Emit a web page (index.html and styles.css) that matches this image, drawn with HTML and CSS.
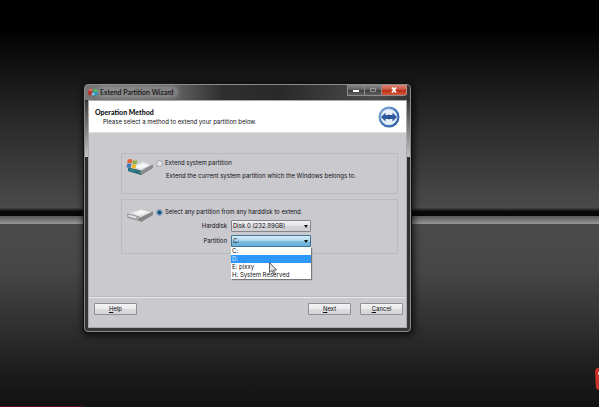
FILE: index.html
```html
<!DOCTYPE html>
<html lang="en">
<head>
  <meta charset="UTF-8"/>
  <meta name="viewport" content="width=device-width, initial-scale=1.0"/>
  <title>Extend Partition Wizard</title>
  <link rel="stylesheet" href="styles.css">
</head>
<body>
  <main class="desktop">
    <section class="window" aria-labelledby="windowTitle">
      <header class="titlebar">
        <svg class="app-icon" viewBox="0 0 20 16">
          <path d="M0 5l6-4 5 3v9l-5 2-6-2z" fill="#b5332c"/>
          <path d="M6 1l5 3-5 3-6-2z" fill="#e0705c"/>
          <path d="M9 4l5-3 6 4v8l-6 3-5-3z" fill="#2b8fb5"/>
          <path d="M9 4l5-3 6 4-5 4z" fill="#58b84e"/>
          <path d="M8 10l3-1 3 3-3 3-4-1z" fill="#7fd0e8"/>
        </svg>
        <h1 id="windowTitle" class="window-title">Extend Partition Wizard</h1>
        <div class="window-controls">
          <button class="control" type="button" aria-label="Minimize">
            <svg viewBox="0 0 8 8"><path d="M1 4h6v2H1z" fill="#fff"/></svg>
          </button>
          <button class="control" type="button" aria-label="Maximize" disabled>
            <svg viewBox="0 0 8 8"><path d="M1.500 2.500h5v3h-5z" fill="none" stroke="#999"/></svg>
          </button>
          <button class="control close" type="button" aria-label="Close">
            <svg viewBox="0 0 8 8"><path d="M2 1.500l4 5M6 1.500l-4 5" stroke="#fff" stroke-width="1.800"/></svg>
          </button>
        </div>
      </header>

      <form class="wizard">
        <div class="wizard-header">
          <div class="heading">
            <h2>Operation Method</h2>
            <p>Please select a method to extend your partition below.</p>
          </div>
          <svg class="resize-icon" viewBox="0 0 44 44">
            <defs>
              <linearGradient id="ring" x1="0" y1="0" x2="1" y2="1">
                <stop offset="0" stop-color="#8fb4df"/>
                <stop offset="0.500" stop-color="#3f74b8"/>
                <stop offset="1" stop-color="#23549c"/>
              </linearGradient>
            </defs>
            <circle cx="22" cy="22" r="21" fill="url(#ring)"/>
            <circle cx="22" cy="22" r="16" fill="#e9f0fa" stroke="#c3d5ec" stroke-width="2"/>
            <path d="M6 22l9-9v5h14v-5l9 9-9 9v-5H15v5z" fill="#2d5a9b"/>
            <path d="M22 17v10" stroke="#1b3f78" stroke-width="2"/>
          </svg>
        </div>

        <div class="wizard-body">
          <div class="group group-system">
            <svg class="disk-icon" viewBox="0 0 84 54">
              <path d="M6 30l42-19 33 10-1 9-34 21-40-12z" fill="#6f7373"/>
              <path d="M8 27l42-17 29 10-33 18z" fill="#d6d8da"/>
              <path d="M21 27l31-12 18 6-24 12z" fill="#f4f5f6"/>
              <path d="M6 28l40 11v12L6 39z" fill="#276b78"/>
              <path d="M46 38l34-17v9L46 51z" fill="#8b8e90"/>
              <path d="M10 32l18 5v5l-18-5z" fill="#3288a0"/>
              <path d="M40 41l4 1v4l-4-1z" fill="#6fc25c"/>
              <path d="M5 6c5-4 10-4 14-1l-2 11c-5-3-9-2-13 1z" fill="#e2632f"/>
              <path d="M21 6c5 3 9 3 13 0l-2 11c-4 3-8 3-13 0z" fill="#8fae4a"/>
              <path d="M3 19c5-3 9-4 13-1l-2 11c-4-3-8-2-12 1z" fill="#3478bd"/>
              <path d="M18 19c5 3 9 3 13 0l-2 11c-4 3-8 3-13 0z" fill="#f0b934"/>
            </svg>
            <div class="options">
              <label class="option"><input type="radio" name="method" value="system">Extend system partition</label>
              <p class="note">Extend the current system partition which the Windows belongs to.</p>
            </div>
          </div>

          <div class="group group-any">
            <svg class="disk-icon" viewBox="0 0 84 54">
              <path d="M4 20l40-15 37 9v9L46 44 5 32z" fill="#777"/>
              <path d="M5 19l39-14 36 9-34 17z" fill="#dededf"/>
              <path d="M22 19l25-9 19 5-23 10z" fill="#f6f6f6"/>
              <path d="M4 20l42 11v13L5 31z" fill="#a9a9aa"/>
              <path d="M46 31l34-16v8L46 44z" fill="#858586"/>
              <path d="M8 23l22 6v5L8 28z" fill="#ececec"/>
              <path d="M39 34l5 1v5l-5-1z" fill="#47514a"/>
            </svg>
            <div class="options">
              <label class="option"><input type="radio" name="method" value="any" checked>Select any partition from any harddisk to extend.</label>
              <div class="field">
                <label for="harddisk">Harddisk</label>
                <div class="picker">
                  <select id="harddisk"><option>Disk 0 (232.89GB)</option></select>
                </div>
              </div>
              <div class="field">
                <label for="partition">Partition</label>
                <div class="picker open">
                  <select id="partition">
                    <option>C:</option>
                    <option>D:</option>
                    <option>E: pixxy</option>
                    <option>H: System Reserved</option>
                  </select>
                  <ul class="dropdown" role="listbox" aria-label="Partition">
                    <li role="option">C:</li>
                    <li role="option" class="active" aria-selected="true">D:</li>
                    <li role="option">E: pixxy</li>
                    <li role="option">H: System Reserved</li>
                  </ul>
                  <svg class="cursor" viewBox="0 0 16 28">
                    <path d="M1 1v20l5-4 4 9 3-2-4-8h6z" fill="#e4e4e8" stroke="#333" stroke-width="1.500"/>
                  </svg>
                </div>
              </div>
            </div>
          </div>
        </div>

        <footer class="wizard-footer">
          <button class="button" type="button"><u>H</u>elp</button>
          <button class="button next" type="button"><u>N</u>ext</button>
          <button class="button" type="button"><u>C</u>ancel</button>
        </footer>
      </form>
    </section>

    <svg class="desktop-badge" viewBox="0 0 4 22">
      <path d="M4 0H2Q0 1 0 4l1 16q1 2 3 2z" fill="#c9322a"/>
      <path d="M3 4h1v3H3z" fill="#e9c8c4"/>
    </svg>
    <div class="progress"></div>
  </main>
</body>
</html>
```
FILE: styles.css
```css
:root {
  --face: #cac9ce;
  --line: #b9b9c0;
  --text: #101014;
  --highlight: #2f96fa;
}

* {
  margin: 0;
  padding: 0;
  box-sizing: border-box;
}

body {
  font-family: Inter, 'Liberation Sans', sans-serif;
  font-size: 6px;
  line-height: 10px;
  color: var(--text);
}

.desktop {
  position: relative;
  min-height: 100vh;
  overflow: hidden;
  background: linear-gradient(#000 0%, #000 7%, #1c1c1c 22%, #333 36%, #4a4a4a 51%, #080808 52%, #080808 53%, #555 53%, #969696 55%, #4b4b4b 55%, #474747 66%, #303030 80%, #1b1b1b 92%, #121212 100%);
}

/* Window frame */
.window {
  position: absolute;
  left: 84px;
  top: 84px;
  width: 327px;
  padding: 0 3px 3px;
  border: 1px solid #8a8c8c;
  border-radius: 4px;
  background:
    linear-gradient(#3c3c3c, #c4c4c4) 0 16px / 100% 56px no-repeat,
    linear-gradient(#4c4c4c, #2a2a2a 16px, #343836);
  box-shadow: 0 0 0 1px #111, 1px 2px 7px 2px rgba(0, 0, 0, 0.7);
}

.titlebar {
  display: flex;
  align-items: center;
  height: 15px;
  margin: 0 -3px;
  padding: 0 3px 1px;
  border-radius: 3px 3px 0 0;
  background: linear-gradient(90deg, #777 0%, #686868 26%, #2f2f2f 42%, #292929 60%, #4c4c4c 90%, #333 100%);
}

.app-icon {
  width: 10px;
  height: 8px;
}

.window-title {
  padding: 0 4px 0 2px;
  font-family: Lato, 'Liberation Sans', sans-serif;
  font-size: 7px;
  font-weight: normal;
  color: #000;
  background: rgba(170, 170, 170, 0.4);
  border-radius: 5px;
  box-shadow: 0 0 4px 1px rgba(170, 170, 170, 0.4);
}

.window-controls {
  display: flex;
  align-self: flex-start;
  margin-left: auto;
}

.control {
  display: flex;
  align-items: center;
  justify-content: center;
  width: 17px;
  height: 11px;
  border: 1px solid #8d8d8d;
  border-top: none;
  border-right: none;
  background: linear-gradient(#8a8a8a, #5d5d5d 50%, #3c3c3c 50%, #606060);
}

.control svg {
  width: 8px;
  height: 8px;
}

.control.close {
  width: 26px;
  border-right: 1px solid #b58b84;
  border-radius: 0 0 3px 0;
  background: linear-gradient(#dd8674, #c8503a 50%, #b52a12 50%, #d9593c);
}

/* Wizard */
.wizard {
  background: var(--face);
  border: 1px solid #a9aaac;
}

.wizard-header {
  display: flex;
  align-items: center;
  justify-content: space-between;
  padding: 5px 6px 4px;
  background: #fff;
  border-bottom: 1px solid #dfdfe2;
}

.heading h2 {
  font-family: Lato, 'Liberation Sans', sans-serif;
  font-size: 7px;
  font-weight: 900;
  line-height: 10px;
}

.heading p {
  padding-left: 8px;
}

.resize-icon {
  width: 22px;
  height: 22px;
}

.wizard-body {
  display: grid;
  gap: 5px;
  padding: 20px 8px 43px 32px;
}

.group {
  display: flex;
  align-items: flex-start;
  gap: 2px;
  padding-left: 4px;
  border: 1px solid var(--line);
}

.group-system {
  min-height: 41px;
  padding-top: 4px;
}

.group-any {
  padding-top: 7px;
  padding-bottom: 6px;
}

.disk-icon {
  width: 28px;
  height: 18px;
}

.options {
  display: grid;
  gap: 3px;
}

.option {
  display: flex;
  align-items: center;
  gap: 2px;
}

.option input {
  appearance: none;
  width: 7px;
  height: 7px;
  border: 1px solid #a2a2a8;
  border-radius: 50%;
  background: #e4e4e8;
}

.option input:checked {
  border-color: #8b98a8;
  background: radial-gradient(circle, #12466f 0 1px, #3f87b8 2px, #d8e4ec 3px);
}

.note {
  padding-left: 10px;
}

.field {
  display: flex;
  align-items: center;
  gap: 4px;
}

.field label {
  width: 71px;
  text-align: right;
}

.picker {
  position: relative;
  width: 80px;
}

.picker::after {
  content: "";
  position: absolute;
  right: 3px;
  top: 5px;
  border: 2px solid transparent;
  border-top: 3px solid #111;
  border-bottom: none;
  pointer-events: none;
}

.picker select {
  display: block;
  appearance: none;
  width: 100%;
  height: 12px;
  padding: 0 10px 0 1px;
  font: inherit;
  color: var(--text);
  border: 1px solid #85858a;
  border-radius: 1px;
  background: linear-gradient(#f1f1f2, #e4e4e6 50%, #d5d5d8 50%, #cfcfd2);
}

.picker.open select {
  border-color: #3e7599;
  background: linear-gradient(#d5ebf6, #aed8ee 50%, #7fbfe0 50%, #6bb0d6);
}

.dropdown {
  position: absolute;
  left: 0;
  top: 12px;
  width: 100%;
  list-style: none;
  line-height: 8px;
  background: #fff;
  box-shadow: 1px 1px 1px #77777c;
}

.dropdown li {
  padding-left: 1px;
}

.dropdown .active {
  color: #d9ecff;
  background: var(--highlight);
}

.cursor {
  position: absolute;
  left: 38px;
  top: 27px;
  width: 8px;
  height: 14px;
}

.wizard-footer {
  display: flex;
  gap: 9px;
  padding: 5px 3px 12px 5px;
  border-top: 1px solid #e9e9ec;
  box-shadow: 0 -1px 0 var(--line);
}

.button {
  width: 43px;
  height: 12px;
  font: inherit;
  line-height: 10px;
  color: var(--text);
  border: 1px solid #8f8f94;
  border-radius: 1px;
  background: linear-gradient(#f4f4f5, #ebebed 50%, #dcdcdf 50%, #d6d6d9);
}

.button.next {
  margin-left: auto;
}

.desktop-badge {
  position: absolute;
  right: 0;
  top: 368px;
  width: 4px;
  height: 22px;
}

.progress {
  position: absolute;
  left: 0;
  bottom: 0;
  width: 14%;
  height: 1px;
  background: #5c0d1c;
}
```
